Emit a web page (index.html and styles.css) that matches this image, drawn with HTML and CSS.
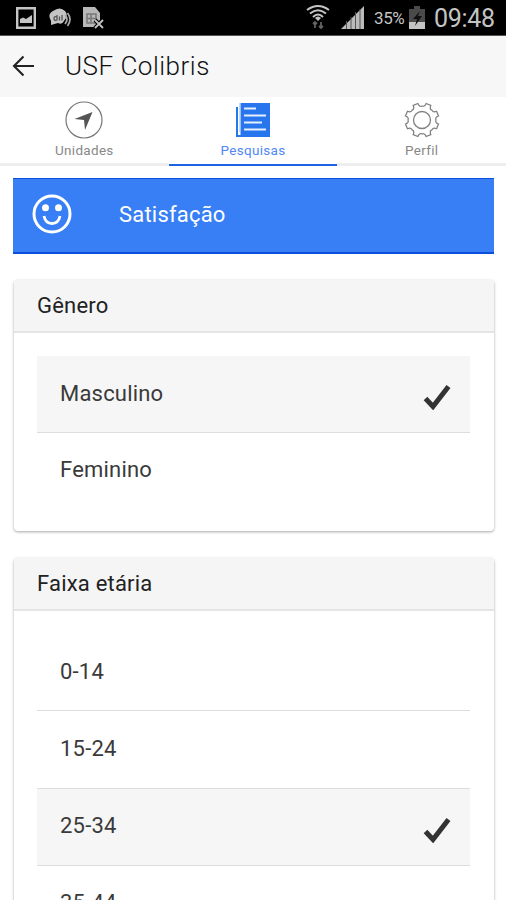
FILE: index.html
```html
<!DOCTYPE html>
<html lang="pt-BR">
<head>
<meta charset="utf-8">
<title>USF Colibris</title>
<link rel="stylesheet" href="styles.css">
</head>
<body>
<div class="statusbar">
  <div class="notifications">
    <svg width="20" height="22" viewBox="0 0 20 22"><path d="M1.200 1.200h17.600v19.600H1.200z" fill="none" stroke="#c4c4c4" stroke-width="2.400"/><path d="M4 16v-4l3-1.500 3 1.500 6-4v8z" fill="#c4c4c4"/></svg>
    <svg width="23" height="22" viewBox="0 0 23 22"><path d="M2 14Q-2 7 4 4Q11-1 16 4Q20 8 15 14Q13 18 9 16L2 18Z" fill="#c4c4c4"/><path d="M8 10q-3-1-3 1.500t3 1.500V8M10.500 9.500v4M13 8v5.500" fill="none" stroke="#555" stroke-width="1.300"/><path d="M16 8q4 4 0 9M18.500 6q5 6 0 13" fill="none" stroke="#aaa" stroke-width="1.700"/></svg>
    <svg width="22" height="22" viewBox="0 0 22 22"><path d="M0 0h12l5 6v7l-4 7H0z" fill="#b8b8b8"/><path d="M4 7h9v9H4zM8 7v9M4 11.500h9" fill="none" stroke="#777" stroke-width="1.500"/><path d="M12 13l8 8M20 13l-8 8" stroke="#000" stroke-width="4"/><path d="M12 13l8 8M20 13l-8 8" stroke="#c4c4c4" stroke-width="1.800"/></svg>
  </div>
  <div class="indicators">
    <svg class="wifi" width="24" height="26" viewBox="0 0 24 26"><g fill="none" stroke="#c4c4c4" stroke-width="2"><path d="M1 6q11-8 22 0M4 9.500q8-6.500 16 0M7 13q5-5 10 0"/></g><path d="M9 14q3-3 6 0l-3 3z" fill="#c4c4c4"/><path d="M9 24v-6M7 20l2-2 2 2M15 18v6M13 22l2 2 2-2" fill="none" stroke="#626262" stroke-width="1.800"/></svg>
    <svg class="signal" width="23" height="23" viewBox="0 0 23 23"><path d="M23 0v23H0z" fill="#bbb"/><path d="M5.500 15v8M10 11v12M14.500 6v17M19 3v20" stroke="#555" stroke-width="1"/></svg>
    <span class="percent">35%</span>
    <svg class="battery" width="16" height="23" viewBox="0 0 16 23"><path d="M5 0h6v3h5v20H0V3h5z" fill="#4a4a4a"/><path d="M0 16h16v7H0z" fill="#c4c4c4"/><path d="M11 5L4 13h4l-2 7 7-10H9z" fill="#111"/></svg>
    <span class="clock">09:48</span>
  </div>
</div>
<header class="appbar">
  <svg width="23" height="22" viewBox="0 0 23 22"><path d="M22 11H2M11.500 1.500L2 11l9.500 9.500" fill="none" stroke="#222" stroke-width="2.100"/></svg>
  <h1>USF Colibris</h1>
</header>
<nav class="tabs">
  <a class="tab">
    <svg width="38" height="38" viewBox="0 0 38 38"><circle cx="19" cy="19" r="18" fill="none" stroke="#777" stroke-width="1.200"/><path d="M27.500 11L20 29l-1-10-9.500-1z" fill="#555"/></svg>
    <span>Unidades</span>
  </a>
  <a class="tab active">
    <svg width="38" height="38" viewBox="0 0 38 38"><path d="M6.500 2H36v34H6.500z" fill="#2876ed"/><path d="M3 6v29h6" fill="none" stroke="#2876ed" stroke-width="2"/><path d="M5.700 2v29" stroke="#b8d3ff" stroke-width="1"/><path d="M10 7.500h12M10 14.500h22M10 21.500h18M10 28.500h22" stroke="#e5efff" stroke-width="2"/></svg>
    <span>Pesquisas</span>
  </a>
  <a class="tab">
    <svg width="38" height="38" viewBox="0 0 38 38"><g fill="none" stroke="#808080" stroke-width="1.300"><circle cx="19" cy="19" r="8.500"/><path id="gear" d=""/></g></svg>
    <span>Perfil</span>
  </a>
</nav>
<main>
  <div class="banner">
    <svg width="40" height="40" viewBox="0 0 40 40"><circle cx="20" cy="20" r="18" fill="none" stroke="#fff" stroke-width="3"/><circle cx="13.500" cy="13.700" r="3.500" fill="#fff"/><circle cx="26.500" cy="13.700" r="3.500" fill="#fff"/><path d="M12 22q1.500 7.500 8 7.500t8-7.500" fill="none" stroke="#fff" stroke-width="2.800"/></svg>
    <span>Satisfação</span>
  </div>
  <section class="card">
    <h2>Gênero</h2>
    <ul>
      <li class="selected">Masculino<svg width="28" height="26" viewBox="0 0 28 26"><path d="M2.500 14.500l7.500 8L25.500 2.500" fill="none" stroke="#333" stroke-width="5"/></svg></li>
      <li>Feminino</li>
    </ul>
  </section>
  <section class="card">
    <h2>Faixa etária</h2>
    <ul>
      <li>0-14</li>
      <li>15-24</li>
      <li class="selected">25-34<svg width="28" height="26" viewBox="0 0 28 26"><path d="M2.500 14.500l7.500 8L25.500 2.500" fill="none" stroke="#333" stroke-width="5"/></svg></li>
      <li>35-44</li>
    </ul>
  </section>
</main>
<script src="gear.js"></script>
</body>
</html>
```
FILE: styles.css
```css
* { box-sizing: border-box; }
body { margin: 0; height: 900px; overflow: hidden; background: #fff; color: #333; font-family: Roboto, sans-serif; }
svg { display: block; flex: none; }
.statusbar { height: 36px; background: #000; border-bottom: 1px solid #555; display: flex; justify-content: space-between; padding: 0 10px 0 16px; color: #c4c4c4; }
.notifications { display: flex; align-items: flex-start; gap: 13px; padding-top: 7px; }
.notifications svg:last-child { margin-left: -2px; }
.indicators { display: flex; align-items: flex-start; }
.wifi { margin: 4px 11px 0 0; }
.signal { margin: 6px 10px 0 0; }
.percent { width: 32px; margin-right: 3px; font-size: 17px; line-height: 37px; letter-spacing: -.4px; white-space: nowrap; }
.battery { margin: 6px 9px 0 0; }
.clock { width: 62px; font-size: 25px; line-height: 37px; letter-spacing: -.3px; white-space: nowrap; }
.appbar { height: 61px; background: #f7f7f8; display: flex; align-items: center; gap: 30px; padding: 0 0 1px 12px; }
.appbar h1 { margin: 0; font-size: 26px; font-weight: 300; line-height: 58px; color: #111; letter-spacing: .5px; }
.tabs { height: 70px; display: grid; grid-template-columns: repeat(3, 1fr); border-bottom: 1px solid #fff; }
.tab { display: flex; flex-direction: column; align-items: center; padding-top: 4px; color: #888; font-size: 13.500px; line-height: 16px; border-bottom: 3px solid #eee; }
.tab span { margin-top: 3px; letter-spacing: .3px; }
.tab.active { color: #5188f3; border-bottom: 2px solid #1f63e5; height: 69px; }
main { padding: 11px 12px 0 13px; }
.banner { height: 76px; background: #387ef5; border: 1px solid #0c4fe0; border-width: 1px 0 2px; color: #fff; display: flex; align-items: center; gap: 47px; padding: 0 0 3px 19px; font-size: 22px; letter-spacing: .2px; }
.card { margin: 26px 0 27px 1px; width: 480px; height: 251px; border-radius: 4px; background: #fff; box-shadow: 0 1px 3px rgba(0,0,0,.35); }
.card + .card { height: 480px; }
.card h2 { margin: 0; height: 53px; line-height: 51px; background: #f5f5f5; border-bottom: 2px solid #e5e5e5; border-radius: 4px 4px 0 0; padding-left: 23px; font-size: 22px; font-weight: 400; color: #222; letter-spacing: .2px; }
.card ul { margin: 0; padding: 23px 24px 0 23px; list-style: none; }
.card li { height: 77.300px; padding: 0 19px 2px 23px; display: flex; align-items: center; justify-content: space-between; border-bottom: 1.500px solid #ddd; font-size: 22px; letter-spacing: .2px; color: #3a3a3a; }
.card li svg { margin-top: 8px; }
.card li:last-child { border-bottom: 0; padding-bottom: 5px; }
.card li.selected { background: #f6f6f6; }
```
FILE: gear.js
```js
// Builds the settings gear outline: eight teeth joined by concave valleys.
const rings = [];
for (let i = 0; i < 8; i++) {
  const at = (deg, r) => {
    const a = (i * 45 + deg) * Math.PI / 180;
    return (19 + r * Math.cos(a)).toFixed(2) + " " + (19 + r * Math.sin(a)).toFixed(2);
  };
  rings.push((i ? "L" : "M") + at(14, 17) + "L" + at(31, 17) + "Q" + at(34, 13) + " " + at(45, 14) + "Q" + at(56, 13) + " " + at(59, 17));
}
document.getElementById("gear").setAttribute("d", rings.join("") + "Z");
```
